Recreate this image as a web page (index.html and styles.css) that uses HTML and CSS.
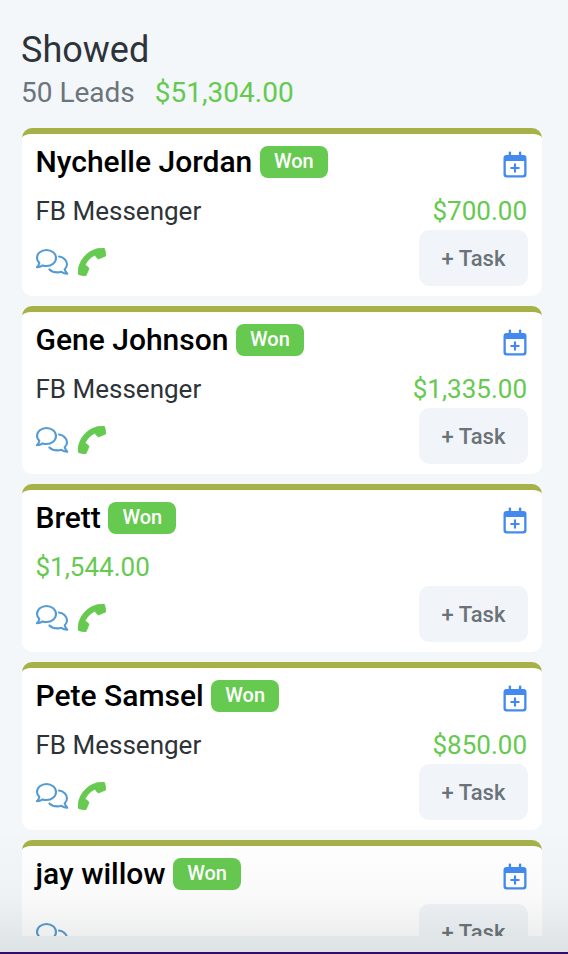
FILE: index.html
```html
<!DOCTYPE html>
<html lang="en">
<head>
<meta charset="utf-8">
<title>Leads</title>
<link rel="stylesheet" href="styles.css">
</head>
<body>
<svg class="defs" aria-hidden="true">
  <symbol id="chat" viewBox="0 0 34 28">
    <g fill="none" stroke="currentColor" stroke-width="2.1" stroke-linecap="round" stroke-linejoin="round">
      <path d="M4.400 14.900C2.800 13.400 2 11.900 2 10C2 5.500 6.300 2 11.500 2S21 5.500 21 10S16.700 18 11.500 18Q9.500 18 7.700 17.400Q5.200 19.200 1.900 19.300Q3.900 17.300 4.400 14.900Z"/>
      <path d="M24 8.500C28.600 9.200 32 12.400 32 16.300C32 18.200 31.200 19.900 29.700 21.300Q30.300 23.700 32.300 25.800Q28.900 25.500 26.300 23.800Q24.500 24.400 22.500 24.400C18.800 24.400 16.200 23.200 14.400 21.400"/>
    </g>
  </symbol>
  <symbol id="phone" viewBox="0 0 512 512">
    <path fill="currentColor" stroke="currentColor" stroke-width="14" transform="rotate(180 256 256)" d="M493.400 24.600l-104-24c-11.300-2.600-22.900 3.300-27.500 13.900l-48 112c-4.200 9.800-1.400 21.300 6.900 28l60.600 49.600c-36 76.700-98.900 140.500-177.200 177.200l-49.600-60.600c-6.800-8.300-18.200-11.100-28-6.900l-112 48C3.900 366.500-2 378.100.6 389.400l24 104C27.100 504.200 36.700 512 48 512c256.100 0 464-207.500 464-464 0-11.200-7.700-20.900-18.600-23.400z"/>
  </symbol>
  <symbol id="calendar" viewBox="0 0 24 27">
    <path fill="currentColor" fill-rule="evenodd" d="M5.700 1Q5.700 .4 6.900 .4T8.100 1V4H15.900V1Q15.900 .4 17.100 .4T18.300 1V4H20.500Q23.500 4 23.500 7V23.500Q23.500 26.500 20.500 26.500H3.500Q.5 26.500 .5 23.500V7Q.5 4 3.500 4H5.700ZM2.800 10V22.800Q2.800 24.200 4.200 24.200H19.800Q21.200 24.200 21.200 22.800V10Z"/>
    <path fill="none" stroke="currentColor" stroke-width="2.200" stroke-linecap="round" d="M12 13.300V20.700M8.300 17H15.700"/>
  </symbol>
</svg>
<main class="column">
  <header class="head">
    <h1 class="stage">Showed</h1>
    <div class="summary"><span class="count">50 Leads</span><span class="total">$51,304.00</span></div>
  </header>
  <div class="list">
    <article class="card">
      <div class="title"><h2 class="name">Nychelle Jordan</h2><span class="badge">Won</span><svg class="calendar"><use href="#calendar"/></svg></div>
      <div class="detail"><span class="source">FB Messenger</span><span class="amount">$700.00</span></div>
      <div class="actions"><svg class="chat"><use href="#chat"/></svg><svg class="phone"><use href="#phone"/></svg><button class="task">+ Task</button></div>
    </article>
    <article class="card">
      <div class="title"><h2 class="name">Gene Johnson</h2><span class="badge">Won</span><svg class="calendar"><use href="#calendar"/></svg></div>
      <div class="detail"><span class="source">FB Messenger</span><span class="amount">$1,335.00</span></div>
      <div class="actions"><svg class="chat"><use href="#chat"/></svg><svg class="phone"><use href="#phone"/></svg><button class="task">+ Task</button></div>
    </article>
    <article class="card">
      <div class="title"><h2 class="name">Brett</h2><span class="badge">Won</span><svg class="calendar"><use href="#calendar"/></svg></div>
      <div class="detail"><span class="amount">$1,544.00</span></div>
      <div class="actions"><svg class="chat"><use href="#chat"/></svg><svg class="phone"><use href="#phone"/></svg><button class="task">+ Task</button></div>
    </article>
    <article class="card">
      <div class="title"><h2 class="name">Pete Samsel</h2><span class="badge">Won</span><svg class="calendar"><use href="#calendar"/></svg></div>
      <div class="detail"><span class="source">FB Messenger</span><span class="amount">$850.00</span></div>
      <div class="actions"><svg class="chat"><use href="#chat"/></svg><svg class="phone"><use href="#phone"/></svg><button class="task">+ Task</button></div>
    </article>
    <article class="card compact">
      <div class="title"><h2 class="name">jay willow</h2><span class="badge">Won</span><svg class="calendar"><use href="#calendar"/></svg></div>
      <div class="actions"><svg class="chat"><use href="#chat"/></svg><button class="task">+ Task</button></div>
    </article>
  </div>
</main>
<div class="fade"></div>
</body>
</html>
```
FILE: styles.css
```css
* { box-sizing: border-box; }
body {
  margin: 0;
  height: 954px;
  overflow: hidden;
  background: #f3f7fa;
  border-bottom: 2px solid #350b69;
  font-family: Roboto, "Liberation Sans", sans-serif;
  color: #2d3338;
}
.defs { position: absolute; width: 0; height: 0; }
.column {
  display: flex;
  flex-direction: column;
  height: 936px;
  padding: 28px 26px 0 22px;
  overflow: hidden;
}
.head { flex: none; height: 100px; margin-left: -1px; }
.stage { margin: 0; font-size: 36px; font-weight: 400; line-height: 44px; }
.summary { display: flex; gap: 20px; font-size: 28px; line-height: 42px; }
.count { color: #6c747c; }
.total, .amount { color: #66c950; }
.list { display: flex; flex-direction: column; gap: 10px; }
.card {
  flex: none;
  height: 168px;
  padding: 6px 15px 0 13.5px;
  background: #fff;
  border-top: 6px solid #a6b248;
  border-radius: 10px;
}
.title { display: flex; align-items: center; height: 44px; gap: 7.5px; }
.name { margin: 0; font-size: 30px; font-weight: 500; line-height: 44px; color: #000; white-space: nowrap; }
.badge {
  width: 68px;
  height: 32px;
  border-radius: 8px;
  background: #66c950;
  color: #fff;
  font-size: 20px;
  font-weight: 500;
  line-height: 31px;
  text-align: center;
}
.calendar { width: 24px; height: 27px; margin: 5px 0.5px 0 auto; color: #438aef; }
.detail { display: flex; justify-content: space-between; height: 46px; font-size: 26px; line-height: 54px; }
.actions { display: flex; align-items: center; height: 56px; margin-right: -1px; }
.chat { width: 34px; height: 28px; margin: 8px 9.5px 0 -0.8px; color: #559bd3; }
.phone { width: 28px; height: 28px; margin-top: 8px; color: #66c950; }
.task {
  width: 109px;
  height: 56px;
  margin: 0 0 0 auto;
  padding: 0;
  border: 0;
  border-radius: 10px;
  background: #f1f5f9;
  color: #6b7278;
  font: 500 22px/58px Roboto, "Liberation Sans", sans-serif;
}
.compact .title { margin-bottom: 8px; }
.fade {
  position: absolute;
  left: 0;
  right: 0;
  top: 832px;
  height: 120px;
  background: linear-gradient(to bottom, rgba(65, 75, 70, 0) 0%, rgba(65, 75, 70, 0.03) 55%, rgba(65, 75, 70, 0.12) 100%);
  pointer-events: none;
}
```
